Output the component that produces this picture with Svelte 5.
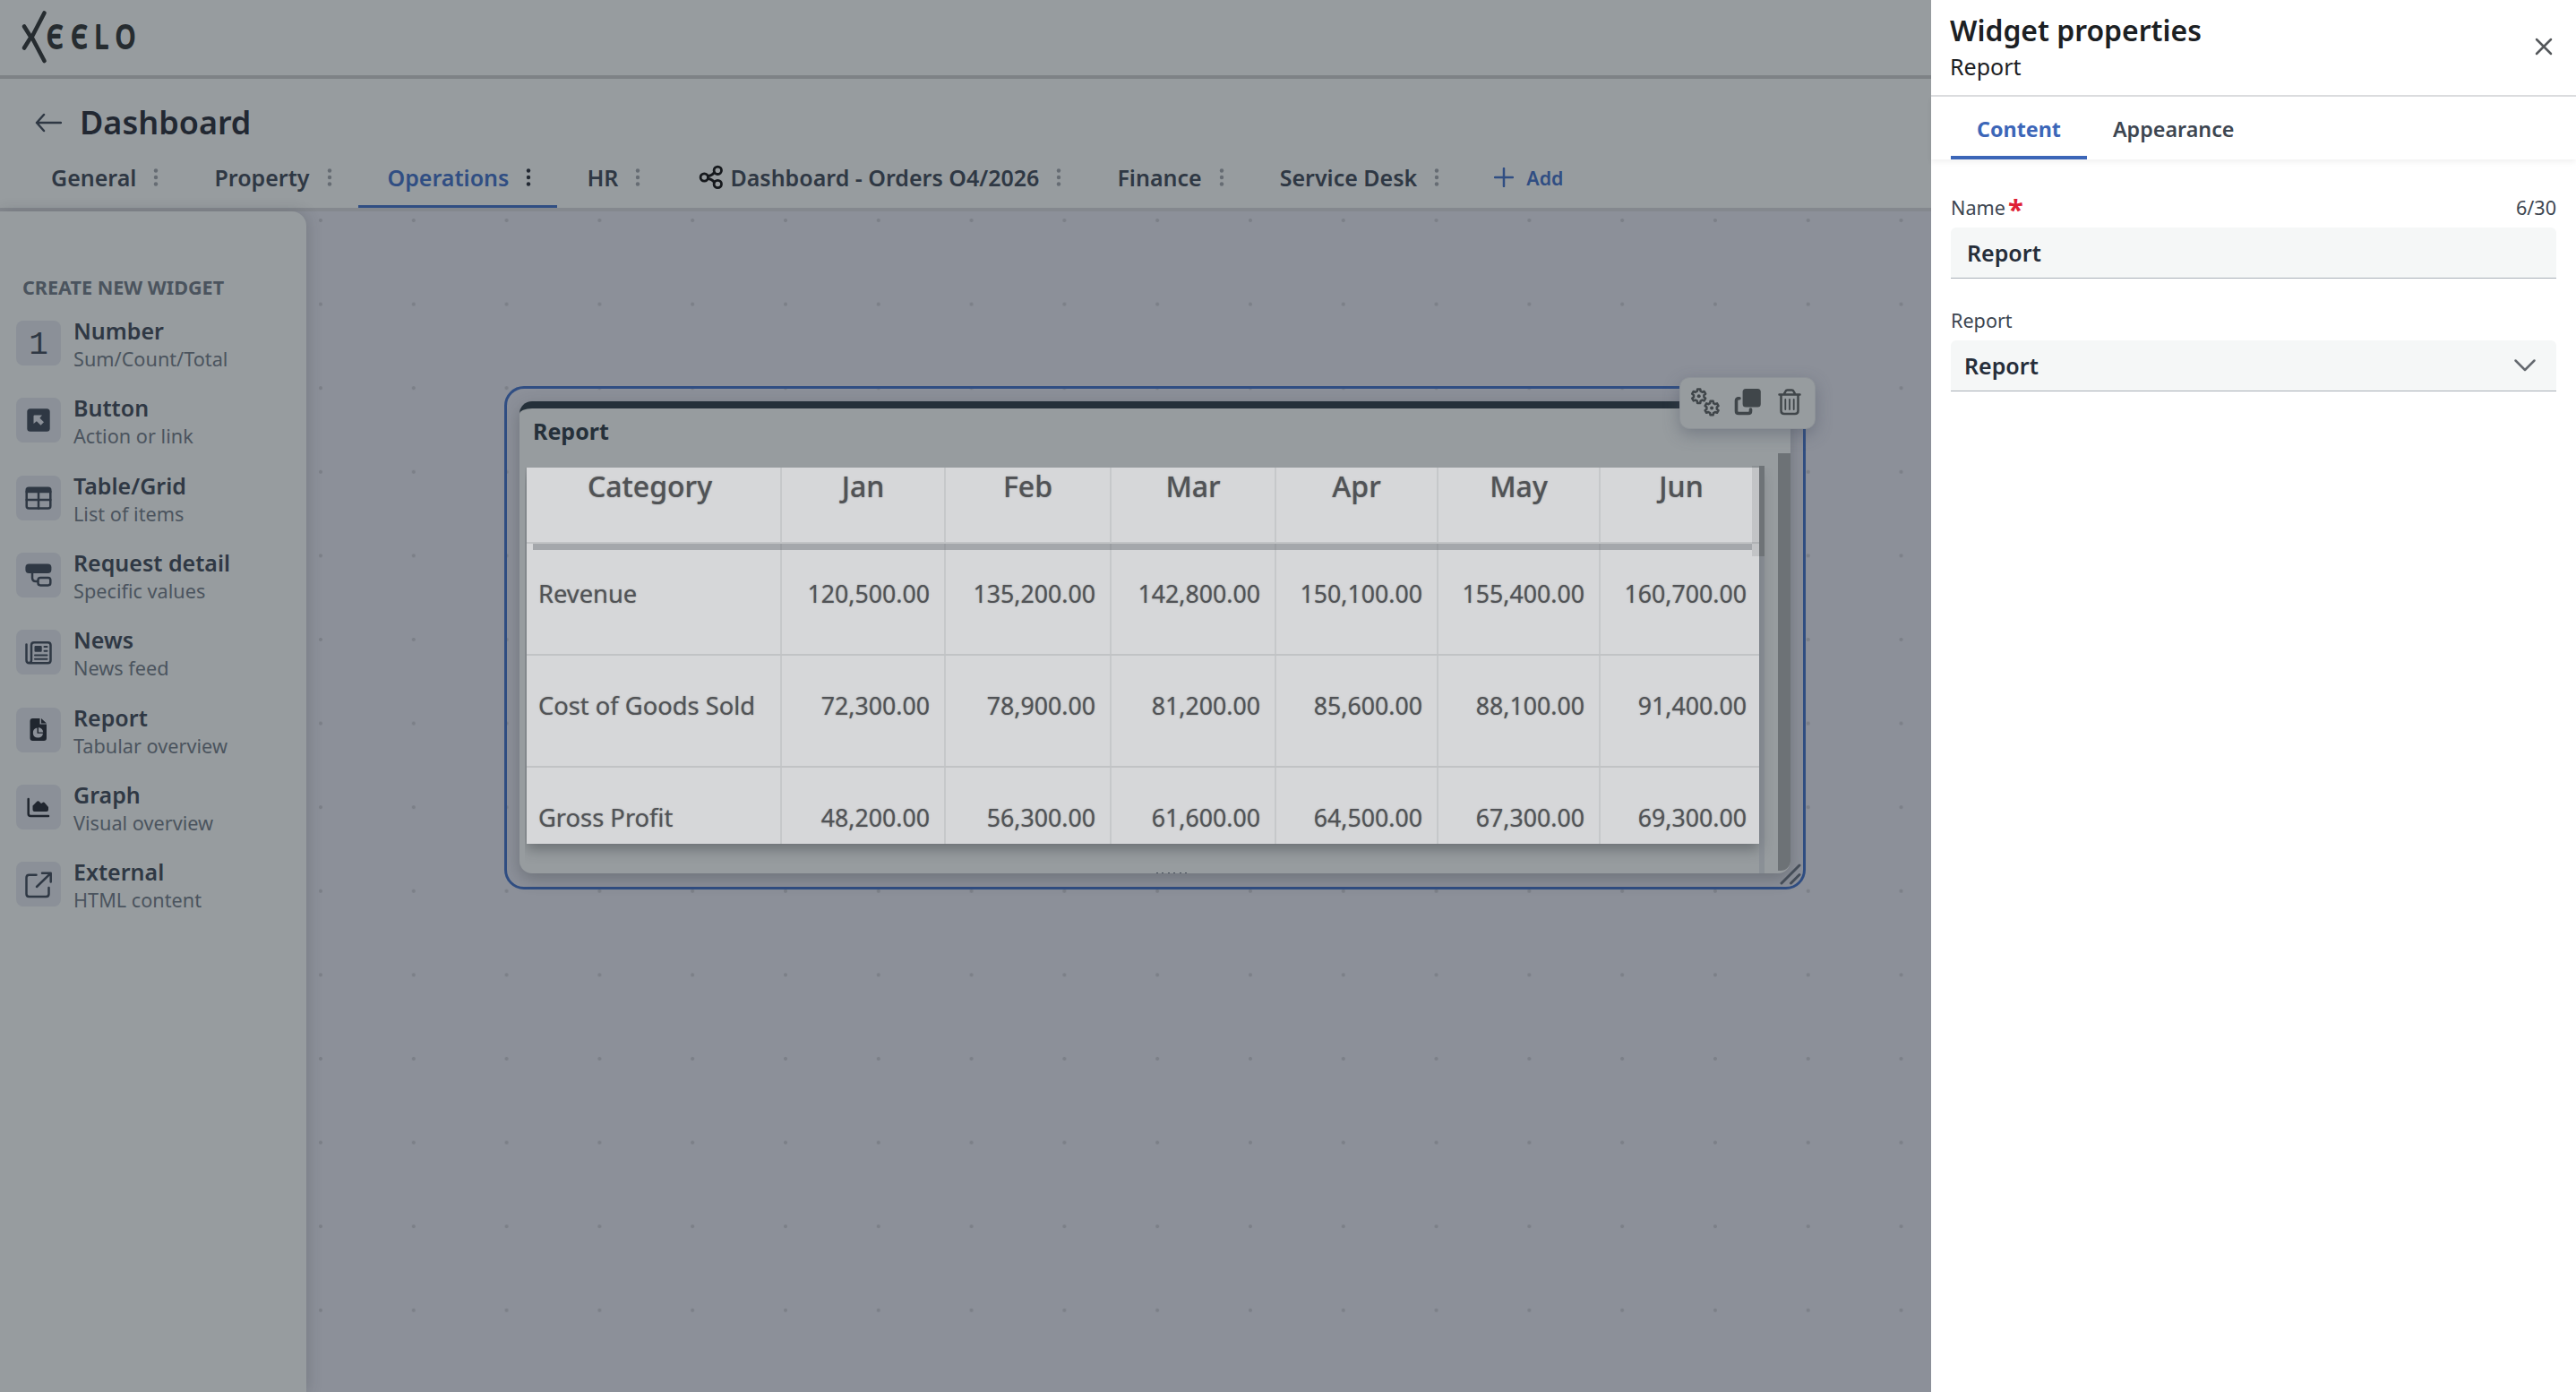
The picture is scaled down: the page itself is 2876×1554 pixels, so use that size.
<script>
  const tabs = [
    { label: 'General' },
    { label: 'Property' },
    { label: 'Operations', active: true },
    { label: 'HR' },
    { label: 'Dashboard - Orders O4/2026', shared: true },
    { label: 'Finance' },
    { label: 'Service Desk' }
  ];

  const widgets = [
    { icon: 'number', name: 'Number', desc: 'Sum/Count/Total' },
    { icon: 'button', name: 'Button', desc: 'Action or link' },
    { icon: 'table', name: 'Table/Grid', desc: 'List of items' },
    { icon: 'detail', name: 'Request detail', desc: 'Specific values' },
    { icon: 'news', name: 'News', desc: 'News feed' },
    { icon: 'report', name: 'Report', desc: 'Tabular overview' },
    { icon: 'graph', name: 'Graph', desc: 'Visual overview' },
    { icon: 'external', name: 'External', desc: 'HTML content' }
  ];

  const months = ['Jan', 'Feb', 'Mar', 'Apr', 'May', 'Jun'];

  const rows = [
    { category: 'Revenue', values: ['120,500.00', '135,200.00', '142,800.00', '150,100.00', '155,400.00', '160,700.00'] },
    { category: 'Cost of Goods Sold', values: ['72,300.00', '78,900.00', '81,200.00', '85,600.00', '88,100.00', '91,400.00'] },
    { category: 'Gross Profit', values: ['48,200.00', '56,300.00', '61,600.00', '64,500.00', '67,300.00', '69,300.00'] }
  ];

  // Six-tooth cog outline around (cx, cy)
  function cog(cx, cy) {
    const pts = [];
    for (let i = 0; i < 6; i++) {
      const a = (i * Math.PI) / 3 - Math.PI / 2;
      [[-0.34, 5.8], [-0.2, 7.9], [0.2, 7.9], [0.34, 5.8]].forEach(([d, r]) => {
        pts.push(`${(cx + r * Math.cos(a + d)).toFixed(2)} ${(cy + r * Math.sin(a + d)).toFixed(2)}`);
      });
    }
    return `M${pts.join('L')}Z`;
  }
</script>

<div class="app">
  <header class="topbar">
    <svg class="logo" width="160" height="84" viewBox="0 0 160 84" aria-label="Xeelo">
      <path d="M27 29.500 34.500 41.500 27 53.500M49.500 14.500 35.500 41.500 49.500 68" />
      <g transform="scale(.8 1)">
        <text x="65 99 132 161" y="54">ЄЄLO</text>
      </g>
    </svg>
  </header>

  <section class="subbar">
    <div class="title-row">
      <svg width="30" height="22" viewBox="0 0 30 22"><path d="M29 11H2M10 2 2 11l8 9" /></svg>
      <h1>Dashboard</h1>
    </div>
    <nav class="tabs">
      {#each tabs as tab}
        <div class="tab" class:active={tab.active} class:shared={tab.shared}>
          {#if tab.shared}
            <svg class="share" width="28" height="28" viewBox="0 0 28 28">
              <circle cx="6.300" cy="14" r="4.200" />
              <circle cx="21.300" cy="6.300" r="4.200" />
              <circle cx="21.300" cy="21.500" r="4.200" />
              <path d="M10.500 12.700q4.500-.7 7-4M10.500 15.300q4.500.7 7 4" />
            </svg>
          {/if}
          <span>{tab.label}</span>
          <svg class="more" width="6" height="20" viewBox="0 0 6 20">
            <circle cx="3" cy="2.500" r="2.200" /><circle cx="3" cy="10" r="2.200" /><circle cx="3" cy="17.500" r="2.200" />
          </svg>
        </div>
      {/each}
      <button class="add">
        <svg width="22" height="22" viewBox="0 0 22 22"><path d="M11 1v20M1 11h20" /></svg>
        Add
      </button>
    </nav>
  </section>

  <main class="workspace">
    <aside class="sidebar">
      <h2>Create new widget</h2>
      <ul>
        {#each widgets as w}
          <li>
            <div class="tile">
              <svg width="50" height="50" viewBox="0 0 50 50">
                {#if w.icon === 'number'}
                  <text x="25" y="37" text-anchor="middle">1</text>
                {:else if w.icon === 'button'}
                  <rect class="fill" x="12.300" y="12.300" width="25.400" height="25.400" rx="3.500" />
                  <path class="hole" d="M19.500 20.500q0-1 1-1h8.500l-2.600 3.200 4.600 4.600-3.500 3.500-4.600-4.600-3.400 2.800z" />
                {:else if w.icon === 'table'}
                  <rect x="11.700" y="13.700" width="26.600" height="22.800" rx="2.500" />
                  <path d="M11.700 18H38.300M11.700 27H38.300M25 18V36.500M12.500 15.500H37.500" />
                {:else if w.icon === 'detail'}
                  <rect class="fill" x="10.400" y="12.500" width="29" height="10.500" rx="4" />
                  <rect x="24.500" y="28" width="13.800" height="8.400" rx="2.600" />
                  <path d="M18 22v6q0 4 4 4h2" />
                {:else if w.icon === 'news'}
                  <path d="M11.500 16.500V34q0 3.200 3.200 3.200H35.500q3 0 3-3V17.200q0-3-3-3H20q-3 0-3 3V34q0 3-2.300 3" />
                  <rect class="fill" x="20.500" y="18" width="8.200" height="6.800" rx="1" />
                  <path class="thin" d="M31.500 19h3M31.500 23.800h3M21 28.400h13.500M21 32.700h13.500" />
                {:else if w.icon === 'report'}
                  <path class="dark" d="M18.500 12h8v6.600h7.500V34q0 3-3 3H18.500q-3 0-3-3V15q0-3 3-3zM28 12l6 5.600h-6z" />
                  <path class="hole" d="M23.500 22.500v6.300h6.500a5.600 5.600 0 1 1-6.500-6.300zM25 22q4.600.8 5.200 5.400H25z" />
                {:else if w.icon === 'graph'}
                  <path class="dark-line" d="M13.700 16V32.500q0 2.500 2.500 2.500H36" />
                  <path class="dark" d="M18.500 28v-4.500l5-5q1-.7 2 0l2.500 2.500 2-1.300q1-.5 1.700.2l4.300 5V28q0 2-2 2H20.500q-2 0-2-2z" />
                {:else}
                  <path d="M22.500 14.700H14.500q-3 0-3 3V36q0 3 3 3H33.500q3 0 3-3V29M29 12.700H38.700V22.500M38.300 13.200 23 28" />
                {/if}
              </svg>
            </div>
            <div class="text">
              <strong>{w.name}</strong>
              <span>{w.desc}</span>
            </div>
          </li>
        {/each}
      </ul>
    </aside>

    <div class="canvas">
      <div class="selection">
        <article class="card">
          <h3>Report</h3>
          <div class="sheet">
            <div class="row head">
              <div class="cell">Category</div>
              {#each months as m}<div class="cell">{m}</div>{/each}
            </div>
            {#each rows as row}
              <div class="row">
                <div class="cell">{row.category}</div>
                {#each row.values as v}<div class="cell">{v}</div>{/each}
              </div>
            {/each}
          </div>
          <div class="inner-track"></div>
          <div class="inner-thumb"></div>
          <div class="h-scroll"></div>
          <div class="outer-thumb"></div>
          <div class="clipped"></div>
        </article>

        <svg class="resize" width="24" height="24" viewBox="0 0 24 24"><path d="M2 22 22 2M12.500 22 22 12.500" /></svg>

        <div class="toolbar">
          <svg width="34" height="34" viewBox="0 0 34 34">
            <path d={cog(9.7, 10.2)} /><circle cx="9.700" cy="10.200" r="2" />
            <path d={cog(24.1, 23.6)} /><circle cx="24.100" cy="23.600" r="2" />
          </svg>
          <svg width="34" height="34" viewBox="0 0 34 34">
            <rect class="solid" x="11.600" y="2" width="20.200" height="20.400" rx="3.500" />
            <path class="heavy" d="M8 12.800H7q-2.500 0-2.500 2.500V27q0 2.500 2.500 2.500H18q2.500 0 2.500-2.500V25" />
          </svg>
          <svg width="34" height="34" viewBox="0 0 34 34">
            <path d="M5.500 8.500H28.500M7.500 9V26.500q0 3.500 3.500 3.500H23q3.500 0 3.500-3.500V9M10.500 8.500l2-3.700q.6-1.300 2-1.300h5q1.400 0 2 1.300l2 3.700" />
            <path class="ribs" d="M12.300 14V25M17 14V25M21.700 14V25" />
          </svg>
        </div>
      </div>
    </div>
  </main>

  <aside class="panel">
    <header>
      <div>
        <h2>Widget properties</h2>
        <p>Report</p>
      </div>
      <svg width="20" height="20" viewBox="0 0 20 20"><path d="M2 2 18 18M18 2 2 18" /></svg>
    </header>
    <nav>
      <span class="current">Content</span>
      <span>Appearance</span>
    </nav>
    <div class="form">
      <div class="label"><span class="required">Name<b>*</b></span><span>6/30</span></div>
      <div class="field">Report</div>
      <div class="label second"><span>Report</span></div>
      <div class="field select">
        Report
        <svg width="26" height="16" viewBox="0 0 26 16"><path d="M2.500 2.500 13 13 23.500 2.500" /></svg>
      </div>
    </div>
  </aside>
</div>

<style>
  :global(body) {
    margin: 0;
    overflow: hidden;
  }

  .app {
    position: relative;
    display: flex;
    flex-direction: column;
    width: 2876px;
    height: 1554px;
    overflow: hidden;
    background: #8c9099;
    font-family: 'Noto Sans', 'Open Sans', sans-serif;
    color: #2f3844;
  }

  h1, h2, h3, p, ul {
    margin: 0;
    padding: 0;
    list-style: none;
  }

  svg {
    display: block;
    flex: none;
    fill: none;
    stroke: currentColor;
    stroke-width: 2.5;
    stroke-linecap: round;
    stroke-linejoin: round;
  }

  /* Top bars */
  .topbar {
    height: 84px;
    background: #979c9f;
    border-bottom: 4px solid #7e8286;
  }

  .logo {
    color: #262c30;
    stroke-width: 4.6;
  }

  .logo text {
    font-size: 36px;
    font-weight: 500;
    fill: currentColor;
    stroke-width: 1.8;
  }

  .subbar {
    height: 144px;
    background: #979c9f;
    border-bottom: 4px solid #84888e;
  }

  .title-row {
    display: flex;
    align-items: center;
    gap: 20px;
    height: 54px;
    padding: 22px 0 0 39px;
  }

  h1 {
    font-size: 36px;
    line-height: 54px;
    font-weight: 600;
    color: #222832;
  }

  .tabs {
    display: flex;
    height: 68px;
    padding-left: 24px;
  }

  .tab {
    display: flex;
    align-items: center;
    box-sizing: border-box;
    padding: 3px 29px 0 33px;
    border-bottom: 3px solid transparent;
    font-size: 25px;
    font-weight: 600;
    white-space: nowrap;
  }

  .tab.shared {
    padding-left: 36px;
  }

  .tab.active {
    color: #304e83;
    border-color: #304e83;
  }

  .share {
    margin-right: 7px;
    color: #16191d;
    stroke-width: 2.8;
  }

  .more {
    margin-left: 19px;
    fill: #666c73;
    stroke: none;
  }

  .active .more {
    fill: #222832;
  }

  .add {
    display: flex;
    align-items: center;
    gap: 14px;
    padding: 0 32px;
    border: 0;
    background: none;
    font: 600 21.4px 'Noto Sans', 'Open Sans', sans-serif;
    color: #304e83;
  }

  /* Sidebar */
  .workspace {
    display: flex;
    flex: 1;
    min-height: 0;
  }

  .sidebar {
    z-index: 1;
    width: 342px;
    box-sizing: border-box;
    padding: 70px 18px 0;
    border-top-right-radius: 16px;
    background: #979c9f;
    box-shadow: 2px 0 16px rgba(40, 45, 50, 0.2);
  }

  .sidebar h2 {
    margin: 0 0 18px 7px;
    font-size: 21.6px;
    line-height: 30px;
    font-weight: 700;
    text-transform: uppercase;
    color: #4b545e;
  }

  .sidebar ul {
    display: flex;
    flex-direction: column;
    gap: 24.33px;
  }

  .sidebar li {
    display: flex;
    gap: 14px;
    height: 62px;
  }

  .tile {
    width: 50px;
    height: 50px;
    margin-top: 4px;
    border-radius: 8px;
    background: #8b9098;
  }

  .tile text {
    font: 36px 'Liberation Mono', monospace;
    fill: currentColor;
    stroke: none;
  }

  .tile .fill {
    fill: currentColor;
    stroke: none;
  }

  .tile .hole {
    fill: #8b9098;
    stroke: none;
  }

  .tile .thin {
    stroke-width: 2;
  }

  .tile .dark {
    fill: #20262f;
    stroke: none;
  }

  .tile .dark-line {
    stroke: #20262f;
  }

  .text {
    display: flex;
    flex-direction: column;
  }

  .text strong {
    font-size: 25px;
    line-height: 31px;
    font-weight: 600;
  }

  .text span {
    font-size: 21.7px;
    line-height: 31px;
    color: #4b545e;
  }

  /* Canvas */
  .canvas {
    position: relative;
    flex: 1;
    background-image: radial-gradient(circle at 2px 2px, #7c8088 1.8px, transparent 2.3px);
    background-size: 103.8px 93.6px;
    background-position: 14px 8px;
  }

  .selection {
    position: absolute;
    left: 221px;
    top: 195px;
    width: 1453px;
    height: 562px;
    box-sizing: border-box;
    padding: 14px;
    border: 3px solid #304e83;
    border-radius: 22px;
  }

  .card {
    position: relative;
    width: 1419px;
    height: 527px;
    box-sizing: border-box;
    padding: 0 8px;
    border-top: 8px solid #25303a;
    border-radius: 14px;
    background: #979c9f;
    box-shadow: 0 6px 18px rgba(40, 45, 50, 0.3);
  }

  .card h3 {
    height: 66px;
    padding-left: 7px;
    font-size: 25px;
    line-height: 50px;
    font-weight: 700;
    color: #25303a;
  }

  .card::before {
    content: '';
    position: absolute;
    left: 8px;
    top: 66px;
    width: 1376px;
    height: 420px;
    box-shadow: 0 6px 14px rgba(40, 45, 50, 0.4);
    clip-path: inset(0 -20px -24px -2px);
  }

  .sheet {
    position: relative;
    width: 1376px;
    height: 420px;
    overflow: hidden;
    background: #d6d7d9;
  }

  .row {
    display: grid;
    grid-template-columns: 285px 183px 185px 184px 181px 181px 177px;
    height: 125px;
    box-sizing: border-box;
    border-bottom: 2px solid #c1c3c5;
  }

  .row.head {
    height: 85px;
  }

  .cell {
    padding-right: 16px;
    border-right: 2px solid #c6c8ca;
    font-size: 26.7px;
    line-height: 112px;
    text-align: right;
    white-space: nowrap;
    color: #515356;
    text-shadow: 0 0 1.5px rgba(81, 83, 86, 0.6);
  }

  .cell:first-child {
    padding: 0 0 0 13px;
    font-size: 27.3px;
    text-align: left;
  }

  .cell:last-child {
    padding-right: 14px;
    border-right: 0;
  }

  .head .cell,
  .head .cell:first-child {
    padding: 0;
    font-size: 32px;
    line-height: 42px;
    font-weight: 500;
    text-align: center;
  }

  .head .cell:first-child {
    padding-right: 8px;
  }

  .head .cell:last-child {
    padding-left: 3px;
  }

  /* Scrollbars over the card */
  .inner-track,
  .inner-thumb,
  .h-scroll,
  .outer-thumb,
  .clipped {
    position: absolute;
  }

  .inner-track {
    left: 1384px;
    top: 64px;
    width: 6px;
    height: 455px;
    background: rgba(125, 131, 142, 0.5);
  }

  .inner-thumb {
    left: 1376px;
    top: 64px;
    width: 14px;
    height: 101px;
    background: linear-gradient(90deg, rgba(60, 65, 70, 0.13) 8px, #6e7377 8px);
  }

  .h-scroll {
    left: 15px;
    top: 151px;
    width: 1361px;
    height: 7px;
    background: rgba(95, 101, 108, 0.42);
  }

  .outer-thumb {
    left: 1405px;
    top: 50px;
    width: 14px;
    height: 466px;
    border-bottom-right-radius: 11px;
    background: #6d7276;
  }

  .clipped {
    left: 711px;
    bottom: 0;
    width: 35px;
    height: 1px;
    background: repeating-linear-gradient(90deg, #4b545e 0 2px, transparent 2px 6.5px);
  }

  .resize {
    position: absolute;
    right: 2px;
    bottom: 2px;
    color: #454d58;
    stroke-width: 3;
  }

  .toolbar {
    position: absolute;
    left: 1309px;
    top: -13px;
    display: flex;
    align-items: center;
    gap: 13px;
    width: 152px;
    height: 58px;
    box-sizing: border-box;
    padding: 0 0 3px 11px;
    border: 1px solid #8e9398;
    border-radius: 11px;
    background: #979c9f;
    box-shadow: 0 6px 18px rgba(70, 78, 95, 0.4);
    color: #40464a;
  }

  .toolbar circle,
  .toolbar .solid {
    fill: currentColor;
    stroke: none;
  }

  .toolbar .heavy {
    stroke-width: 3.6;
  }

  .toolbar .ribs {
    stroke-width: 1.8;
  }

  /* Properties panel */
  .panel {
    position: absolute;
    top: 0;
    right: 0;
    z-index: 2;
    width: 720px;
    height: 100%;
    background: #fff;
    color: #3d4651;
  }

  .panel header {
    display: flex;
    align-items: center;
    justify-content: space-between;
    box-sizing: border-box;
    height: 108px;
    padding: 0 26px 2px 21px;
    border-bottom: 2px solid #dcdddf;
    color: #1c2023;
  }

  .panel header h2 {
    font-size: 31.9px;
    line-height: 44px;
    font-weight: 600;
  }

  .panel header p {
    font-size: 25px;
    line-height: 37px;
  }

  .panel header svg {
    color: #55585b;
  }

  .panel nav {
    display: flex;
    height: 70px;
    padding-left: 22px;
    box-shadow: 0 3px 6px rgba(0, 0, 0, 0.06);
    font-size: 23.3px;
    line-height: 72px;
    font-weight: 600;
  }

  .panel nav span {
    box-sizing: border-box;
    height: 70px;
    padding: 0 29px;
  }

  .panel nav .current {
    font-weight: 700;
    color: #3c66b8;
    border-bottom: 4px solid #3c66b8;
  }

  .form {
    padding: 36px 22px 0;
  }

  .label {
    display: flex;
    justify-content: space-between;
    height: 40px;
    font-size: 21.6px;
    line-height: 35px;
  }

  .label.second {
    margin-top: 29px;
  }

  .required {
    display: flex;
  }

  .label b {
    margin-left: 3px;
    font-size: 31px;
    line-height: 39px;
    color: #df2034;
  }

  .field {
    display: flex;
    align-items: center;
    height: 56px;
    padding: 0 18px;
    border-bottom: 1px solid #a8afb7;
    border-radius: 6px 6px 0 0;
    background: #f5f7f7;
    font-size: 25px;
    font-weight: 600;
    color: #262e3a;
  }

  .select {
    justify-content: space-between;
    padding: 0 22px 0 15px;
  }

  .select svg {
    color: #64696f;
  }
</style>
